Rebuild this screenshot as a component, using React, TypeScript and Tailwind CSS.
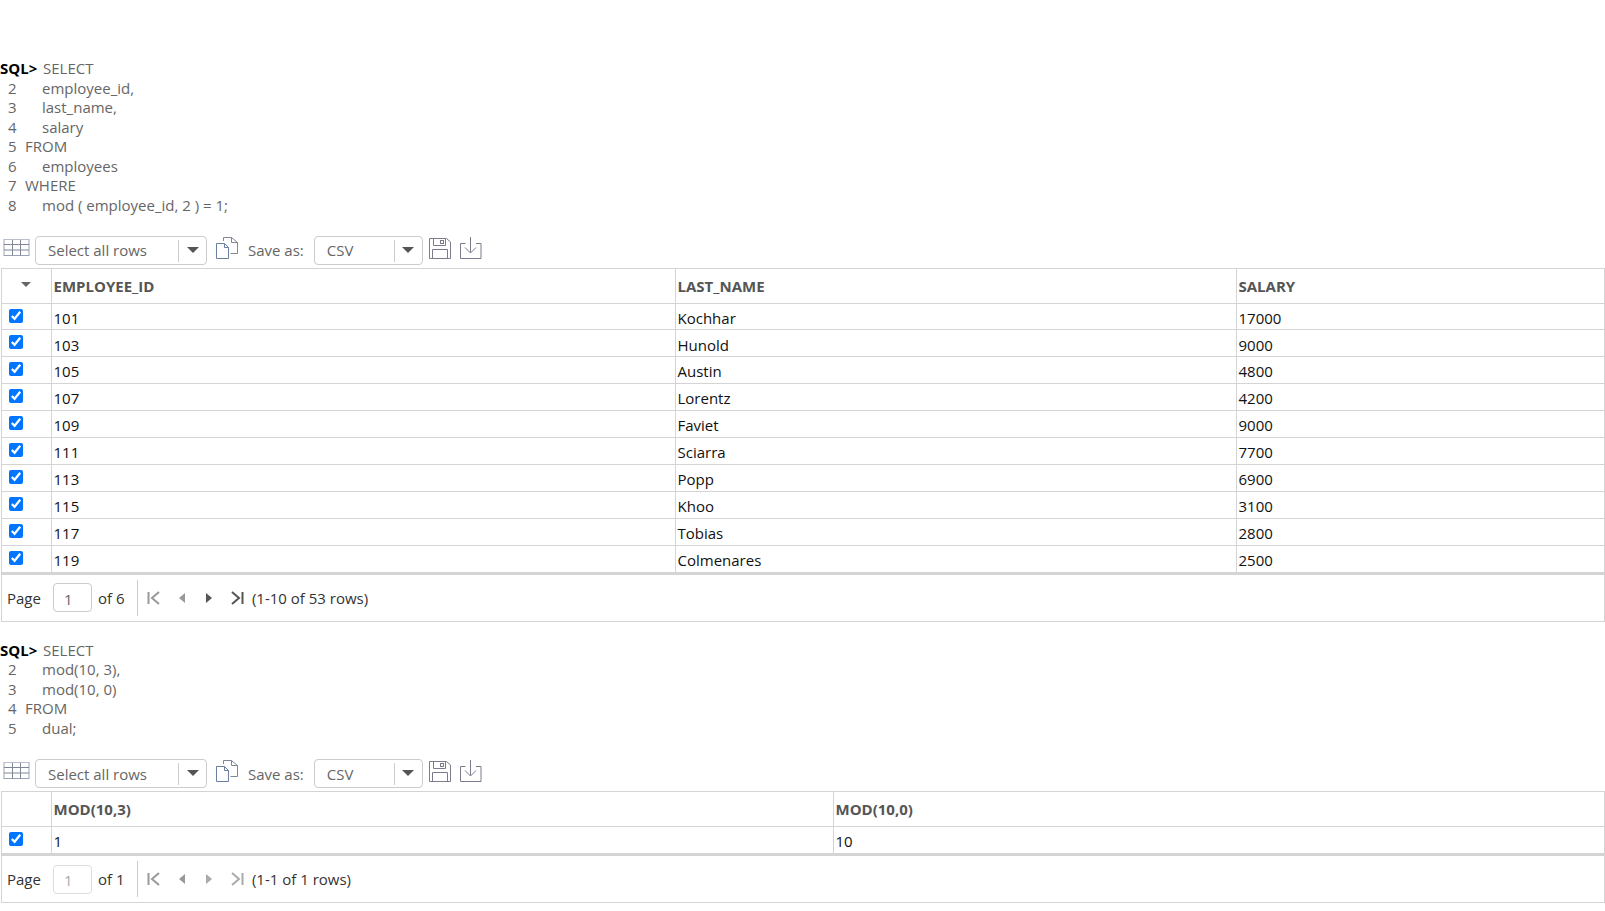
const FONT = "font-['Open_Sans','Noto_Sans',sans-serif]";

function GridIcon() {
  return (
    <svg width="27" height="20" viewBox="0 0 27 20" fill="none" stroke="#7f8797" strokeWidth="1">
      <rect x="1" y="1.5" width="25" height="16" stroke="#9aa3b5" />
      <path d="M1 6.5H26M1 12H26M9.5 1.5V17.5M17.5 1.5V17.5" />
      <path d="M1 1.5H26" stroke="#b9bfca" />
    </svg>
  );
}

function CopyIcon() {
  return (
    <svg width="24" height="24" viewBox="0 0 24 24" fill="none" strokeWidth="1">
      <path d="M1.5 7.5H9.5L13.5 11.5V22.5H1.5Z" stroke="#6b7fa0" />
      <path d="M9.5 7.5V11.5H13.5" stroke="#6b7fa0" />
      <path d="M8.5 5V1.5H16.5L22.5 6.5V17.5H15.5" stroke="#7f8794" />
      <path d="M16.5 1.5V6.5H22.5" stroke="#7f8794" />
    </svg>
  );
}

function SaveIcon() {
  return (
    <svg width="24" height="23" viewBox="0 0 24 23" fill="none" stroke="#7d7a8c" strokeWidth="1">
      <path d="M1.5 1.5H18.5L22.5 5V21.5H1.5Z" />
      <path d="M5.5 1.5V8.5H17.5V1.5" />
      <rect x="12.5" y="3.5" width="3" height="3" />
      <path d="M4.5 21.5V12.5H19.5V21.5" />
    </svg>
  );
}

function DownloadIcon() {
  return (
    <svg width="23" height="24" viewBox="0 0 23 24" fill="none" stroke="#7d7a8c" strokeWidth="1">
      <path d="M6.5 7.5H1.5V22.5H22V7.5H17" />
      <path d="M11.5 1V16.5M6 11.5L11.5 17L17 11.5" />
    </svg>
  );
}

function Caret() {
  return <span className="mb-[2px] w-0 h-0 border-l-[6px] border-r-[6px] border-t-[6px] border-l-transparent border-r-transparent border-t-[#555]" />;
}

function Dropdown({ label, width }: { label: string; width: string }) {
  return (
    <div className={`${width} h-[29px] shrink-0 flex items-center border border-[#ccc] rounded-[4px] pl-[12px] bg-white`}>
      <span className="flex-1 text-[#666]">{label}</span>
      <span className="w-[28px] h-[22px] border-l border-[#ccc] flex items-center justify-center">
        <Caret />
      </span>
    </div>
  );
}

function Toolbar() {
  return (
    <div className="h-[33px] flex items-center pl-[3px]">
      <div className="mt-[-5px] flex"><GridIcon /></div>
      <div className="w-[5px] shrink-0" />
      <Dropdown label="Select all rows" width="w-[172px]" />
      <div className="ml-[8px] mt-[-5px] flex"><CopyIcon /></div>
      <span className="ml-[9px] text-[#666]">Save as:</span>
      <div className="w-[10px] shrink-0" />
      <Dropdown label="CSV" width="w-[109px]" />
      <div className="ml-[5px] mt-[-5px] flex"><SaveIcon /></div>
      <div className="ml-[7px] mt-[-5px] flex"><DownloadIcon /></div>
    </div>
  );
}

function SqlBlock({ lines }: { lines: [string, string, boolean][] }) {
  return (
    <div className="text-[#666] leading-[19.5px]">
      {lines.map(([no, text, indent], i) => (
        <div key={i} className="flex h-[19.5px] whitespace-pre">
          {i === 0 ? (
            <span className="font-bold text-black w-[43px] shrink-0">SQL&gt;</span>
          ) : (
            <span className="w-[25px] pl-[8px] shrink-0">{no}</span>
          )}
          <span className={indent ? 'pl-[17px]' : ''}>{text}</span>
        </div>
      ))}
    </div>
  );
}

function Pager({ page, pages, range, active }: { page: string; pages: string; range: string; active: boolean }) {
  const back = 'text-[#999]';
  const fwd = active ? 'text-[#555]' : 'text-[#aaa]';
  return (
    <div className="h-[46px] flex items-center pl-[5px] text-[#333]">
      <span>Page</span>
      <span className={`ml-[12px] w-[39px] h-[29px] border rounded-[4px] flex items-center pl-[10px] pt-[2px] ${active ? 'border-[#ccc] text-[#666]' : 'border-[#ddd] text-[#aaa]'}`}>{page}</span>
      <span className="ml-[6px] w-[39px]">{pages}</span>
      <span className="h-[36px] w-px bg-[#ccc]" />
      <svg className={`ml-[9px] ${back}`} width="14" height="14" viewBox="0 0 14 14" fill="none" stroke="currentColor">
        <path d="M1.5 1V13" strokeWidth="2" />
        <path d="M12 1L5 7L12 13" strokeWidth="2" />
      </svg>
      <svg className={`ml-[17px] ${back}`} width="8" height="12" viewBox="0 0 8 12" fill="currentColor"><path d="M7 1V11L1 6Z" /></svg>
      <svg className={`ml-[19px] ${fwd}`} width="8" height="12" viewBox="0 0 8 12" fill="currentColor"><path d="M1 1V11L7 6Z" /></svg>
      <svg className={`ml-[17px] ${fwd}`} width="14" height="14" viewBox="0 0 14 14" fill="none" stroke="currentColor">
        <path d="M12.5 1V13" strokeWidth="2" />
        <path d="M2 1L9 7L2 13" strokeWidth="2" />
      </svg>
      <span className="ml-[8px]">{range}</span>
    </div>
  );
}

function DataTable({ cols, rows, sortable }: { cols: { name: string; width: string }[]; rows: string[][]; sortable: boolean }) {
  return (
    <table className="table-fixed w-full border-collapse">
      <colgroup>
        <col className="w-[49px]" />
        {cols.map((c) => <col key={c.name} className={c.width} />)}
      </colgroup>
      <thead>
        <tr className="h-[34px] border-b border-[#d4d4d4]">
          <th className="border-r border-[#d4d4d4] text-center align-middle pb-[4px]">
            {sortable && <span className="inline-block mr-[1px] mb-[3px] w-0 h-0 border-l-[5px] border-r-[5px] border-t-[5px] border-l-transparent border-r-transparent border-t-[#666]" />}
          </th>
          {cols.map((c) => (
            <th key={c.name} className="border-r last:border-r-0 border-[#d4d4d4] text-left font-bold text-[#555] pl-[2px] pt-[1px]">{c.name}</th>
          ))}
        </tr>
      </thead>
      <tbody>
        {rows.map((r, i) => (
          <tr key={i} className={`h-[26.9px] ${i < rows.length - 1 ? 'border-b border-[#d4d4d4]' : ''}`}>
            <td className="border-r border-[#d4d4d4] pl-[7px] align-top pt-[5px]">
              <input type="checkbox" defaultChecked className="block w-[14px] h-[14px] accent-[#0075ff]" />
            </td>
            {r.map((v, j) => (
              <td key={j} className="border-r last:border-r-0 border-[#d4d4d4] pl-[2px] pt-[3px] text-[#111]">{v}</td>
            ))}
          </tr>
        ))}
      </tbody>
    </table>
  );
}

const employees = [
  ['101', 'Kochhar', '17000'],
  ['103', 'Hunold', '9000'],
  ['105', 'Austin', '4800'],
  ['107', 'Lorentz', '4200'],
  ['109', 'Faviet', '9000'],
  ['111', 'Sciarra', '7700'],
  ['113', 'Popp', '6900'],
  ['115', 'Khoo', '3100'],
  ['117', 'Tobias', '2800'],
  ['119', 'Colmenares', '2500'],
];

export default function App() {
  return (
    <div className={`${FONT} text-[15px] bg-white min-h-screen w-[1605px] overflow-hidden pt-[59px]`}>
      <SqlBlock
        lines={[
          ['1', 'SELECT', false],
          ['2', 'employee_id,', true],
          ['3', 'last_name,', true],
          ['4', 'salary', true],
          ['5', 'FROM', false],
          ['6', 'employees', true],
          ['7', 'WHERE', false],
          ['8', 'mod ( employee_id, 2 ) = 1;', true],
        ]}
      />
      <div className="mt-[19px]"><Toolbar /></div>
      <div className="ml-px mt-[1px] border border-[#d4d4d4]">
        <DataTable
          sortable
          cols={[
            { name: 'EMPLOYEE_ID', width: 'w-[624px]' },
            { name: 'LAST_NAME', width: 'w-[561px]' },
            { name: 'SALARY', width: 'w-auto' },
          ]}
          rows={employees}
        />
        <div className="border-t-[3px] border-[#d4d4d4]">
          <Pager page="1" pages="of 6" range="(1-10 of 53 rows)" active />
        </div>
      </div>
      <div className="mt-[19px]">
        <SqlBlock
          lines={[
            ['1', 'SELECT', false],
            ['2', 'mod(10, 3),', true],
            ['3', 'mod(10, 0)', true],
            ['4', 'FROM', false],
            ['5', 'dual;', true],
          ]}
        />
      </div>
      <div className="mt-[19px]"><Toolbar /></div>
      <div className="ml-px mt-[1px] border border-[#d4d4d4]">
        <DataTable
          sortable={false}
          cols={[
            { name: 'MOD(10,3)', width: 'w-[782px]' },
            { name: 'MOD(10,0)', width: 'w-auto' },
          ]}
          rows={[['1', '10']]}
        />
        <div className="border-t-[3px] border-[#d4d4d4]">
          <Pager page="1" pages="of 1" range="(1-1 of 1 rows)" active={false} />
        </div>
      </div>
    </div>
  );
}
